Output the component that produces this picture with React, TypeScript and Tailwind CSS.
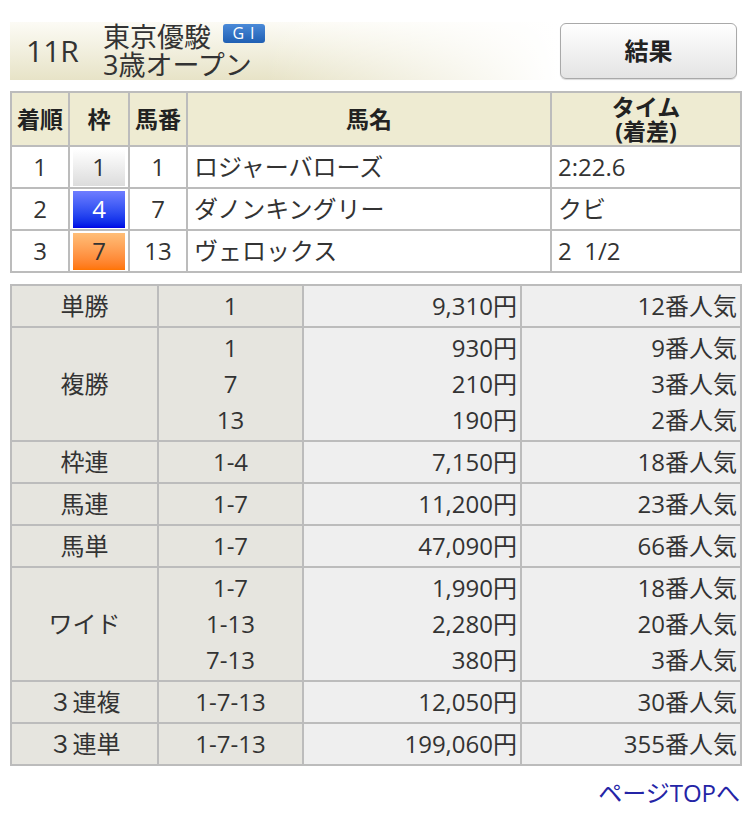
import React from "react";

const font = { fontFamily: '"Open Sans", "Noto Sans CJK JP", sans-serif' };

type Finish = { pos: string; waku: number; num: string; name: string; time: string };

const finishers: Finish[] = [
  { pos: "1", waku: 1, num: "1", name: "ロジャーバローズ", time: "2:22.6" },
  { pos: "2", waku: 4, num: "7", name: "ダノンキングリー", time: "クビ" },
  { pos: "3", waku: 7, num: "13", name: "ヴェロックス", time: "2\u00a0 1/2" },
];

type Pay = { kind: string; combos: string[]; yen: string[]; pop: string[] };

const payouts: Pay[] = [
  { kind: "単勝", combos: ["1"], yen: ["9,310円"], pop: ["12番人気"] },
  { kind: "複勝", combos: ["1", "7", "13"], yen: ["930円", "210円", "190円"], pop: ["9番人気", "3番人気", "2番人気"] },
  { kind: "枠連", combos: ["1-4"], yen: ["7,150円"], pop: ["18番人気"] },
  { kind: "馬連", combos: ["1-7"], yen: ["11,200円"], pop: ["23番人気"] },
  { kind: "馬単", combos: ["1-7"], yen: ["47,090円"], pop: ["66番人気"] },
  { kind: "ワイド", combos: ["1-7", "1-13", "7-13"], yen: ["1,990円", "2,280円", "380円"], pop: ["18番人気", "20番人気", "3番人気"] },
  { kind: "３連複", combos: ["1-7-13"], yen: ["12,050円"], pop: ["30番人気"] },
  { kind: "３連単", combos: ["1-7-13"], yen: ["199,060円"], pop: ["355番人気"] },
];

function WakuBox({ n }: { n: number }) {
  const cls =
    n === 1
      ? "bg-gradient-to-b from-white to-[#dcdcdc] text-[#333]"
      : n === 4
      ? "bg-gradient-to-b from-[#6f7dff] to-[#0000e6] text-white"
      : "bg-gradient-to-b from-[#ffbe78] to-[#ff7400] text-[#333]";
  return <div className={`mx-[3px] h-[37px] flex items-center justify-center ${cls}`}>{n}</div>;
}

function Lines({ items }: { items: string[] }) {
  return (
    <div className="flex flex-col">
      {items.map((t, i) => (
        <div key={i} className="h-[36px] leading-[36px]">
          {t}
        </div>
      ))}
    </div>
  );
}

export default function App() {
  const th = "border-2 border-[#bcbcbc] font-bold text-[23px] leading-[24px] text-[#222] p-0";
  const td = "border-2 border-[#bcbcbc] text-[24px] text-[#333] h-[42px] p-0";
  const pd = "border-2 border-[#bcbcbc] text-[24px] text-[#333] p-0 py-[2px]";

  return (
    <div className="w-[750px] h-[817px] bg-white overflow-hidden" style={font}>
      <div className="pt-[22px] px-[10px]">
        {/* race header */}
        <div className="h-[58px] flex items-center bg-[linear-gradient(to_right,rgba(255,255,255,0)_35%,rgba(255,255,255,1)_75%),linear-gradient(to_bottom,#fcfbf5,#e7e3c7)]">
          <div className="w-[93px] pl-[16px] text-[30px] text-[#333] leading-none">11R</div>
          <div className="flex flex-col text-[27px] leading-[28px] text-[#333] -mt-[1px]">
            <div className="flex items-center">
              <span>東京優駿</span>
              <span className="ml-[12px] h-[19px] w-[42px] rounded-[3px] bg-gradient-to-b from-[#4a8ad8] to-[#1f5fb3] text-white text-[16px] leading-[19px] flex items-center justify-center tracking-[6px] pl-[5px] -mt-[6px]">
                GI
              </span>
            </div>
            <span>3歳オープン</span>
          </div>
          <div className="ml-auto mr-[3px] w-[177px] h-[56px] rounded-[6px] border border-[#a9a9a9] bg-gradient-to-b from-white to-[#e4e4e4] flex items-center justify-center text-[24px] font-bold text-[#222] shadow-[0_1px_1px_rgba(0,0,0,0.15)]">
            結果
          </div>
        </div>

        {/* finishing order */}
        <table className="mt-[11px] w-[730px] table-fixed border-collapse">
          <colgroup>
            <col className="w-[58px]" />
            <col className="w-[60px]" />
            <col className="w-[58px]" />
            <col className="w-[364px]" />
            <col className="w-[190px]" />
          </colgroup>
          <thead>
            <tr className="h-[54px] bg-[#eeebd2]">
              <th className={th}>着順</th>
              <th className={th}>枠</th>
              <th className={th}>馬番</th>
              <th className={th}>馬名</th>
              <th className={th}>
                タイム
                <br />
                (着差)
              </th>
            </tr>
          </thead>
          <tbody>
            {finishers.map((f) => (
              <tr key={f.pos}>
                <td className={`${td} text-center`}>{f.pos}</td>
                <td className={`${td} text-center`}>
                  <WakuBox n={f.waku} />
                </td>
                <td className={`${td} text-center`}>{f.num}</td>
                <td className={`${td} pl-[6px] text-[#1c1c96]`}>{f.name}</td>
                <td className={`${td} pl-[6px]`}>{f.time}</td>
              </tr>
            ))}
          </tbody>
        </table>

        {/* payouts */}
        <table className="mt-[11px] w-[730px] table-fixed border-collapse">
          <colgroup>
            <col className="w-[147px]" />
            <col className="w-[145px]" />
            <col className="w-[218px]" />
            <col className="w-[220px]" />
          </colgroup>
          <tbody>
            {payouts.map((p) => (
              <tr key={p.kind} className={p.combos.length > 1 ? "" : "h-[42px]"}>
                <td className={`${pd} bg-[#e6e5df] text-center`}>{p.kind}</td>
                <td className={`${pd} bg-[#e6e5df] text-center`}>
                  <Lines items={p.combos} />
                </td>
                <td className={`${pd} bg-[#efefef] text-right pr-[3px]`}>
                  <Lines items={p.yen} />
                </td>
                <td className={`${pd} bg-[#efefef] text-right pr-[3px]`}>
                  <Lines items={p.pop} />
                </td>
              </tr>
            ))}
          </tbody>
        </table>

        <div className="mt-[12px] flex justify-end">
          <a className="text-[24px] text-[#2424a6] leading-[30px]">ページTOPへ</a>
        </div>
      </div>
    </div>
  );
}
